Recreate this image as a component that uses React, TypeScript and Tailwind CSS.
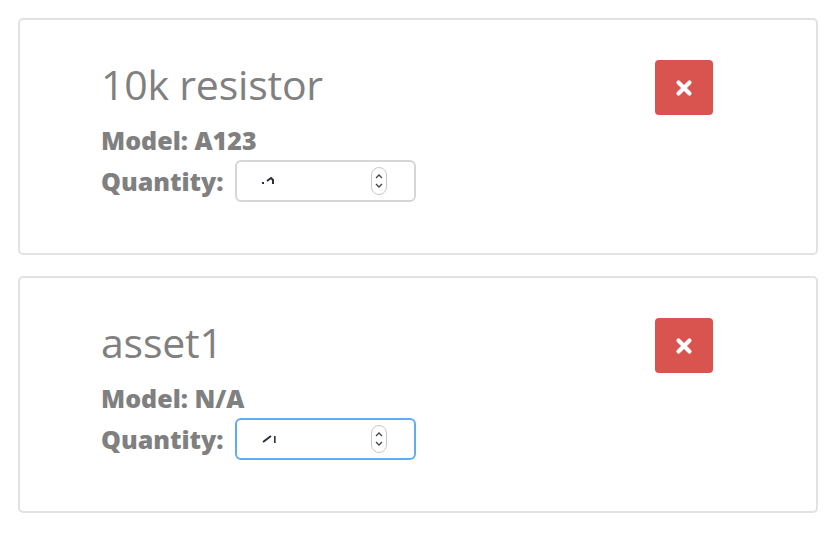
import React from "react";

interface PartItem {
  name: string;
  model: string;
  focused: boolean;
  glyph: "a" | "b";
}

const parts: PartItem[] = [
  { name: "10k resistor", model: "A123", focused: false, glyph: "a" },
  { name: "asset1", model: "N/A", focused: true, glyph: "b" },
];

const Spinner = () => (
  <svg width="16" height="28" viewBox="0 0 16 28" className="shrink-0">
    <rect x="0.5" y="0.5" width="15" height="27" rx="7.5" fill="#fff" stroke="#c8c8c8" />
    <path d="M5 11 L8 8 L11 11" fill="none" stroke="#444" strokeWidth="1.3" />
    <path d="M5 17 L8 20 L11 17" fill="none" stroke="#444" strokeWidth="1.3" />
  </svg>
);

// the value in the reference is a half-drawn glyph, so it's sketched here
const ValueMark = ({ kind }: { kind: "a" | "b" }) =>
  kind === "a" ? (
    <svg width="14" height="10" viewBox="0 0 14 10">
      <rect x="0" y="6" width="2" height="2" fill="#2a2f3a" />
      <path d="M5 5 L9 2 L11 4 L11 8" fill="none" stroke="#2a2f3a" strokeWidth="2" />
    </svg>
  ) : (
    <svg width="16" height="10" viewBox="0 0 16 10">
      <path d="M1 8 L9 2" stroke="#2a2f3a" strokeWidth="2" />
      <rect x="12" y="2" width="1.6" height="7" fill="#2a2f3a" />
    </svg>
  );

const PartCard: React.FC<{ part: PartItem }> = ({ part }) => {
  return (
    <div className="flex justify-between rounded-[5px] border-2 border-[#e2e2e2] bg-white w-[800px] h-[237px]">
      <div className="pl-[81px] pt-[42px]">
        <h3 className="text-[41px] leading-[44px] text-[#808080] font-normal tracking-[-0.2px]">{part.name}</h3>
        <p className="mt-[21px] text-[25px] leading-[26px] font-extrabold text-[#808080]">
          Model: {part.model}
        </p>
        <div className="mt-[7px] flex items-center gap-[11px]">
          <span className="text-[25px] leading-[26px] font-extrabold text-[#808080]">Quantity:</span>
          <div
            className={
              part.focused
                ? "flex items-center w-[181px] h-[42px] rounded-[6px] border-2 border-[#62adf2] pl-[25px] pr-[27px] justify-between"
                : "flex items-center w-[181px] h-[42px] rounded-[6px] border-2 border-[#d6d6d6] pl-[25px] pr-[27px] justify-between"
            }
          >
            <ValueMark kind={part.glyph} />
            <Spinner />
          </div>
        </div>
      </div>
      <button className="mt-[40px] mr-[103px] w-[58px] h-[55px] rounded-[4px] bg-[#d9534f] flex items-center justify-center cursor-pointer">
        <svg width="18" height="18" viewBox="0 0 18 18">
          <path d="M3.5 3.5 L14.5 14.5 M14.5 3.5 L3.5 14.5" stroke="#fff" strokeWidth="4.2" strokeLinecap="round" />
        </svg>
      </button>
    </div>
  );
};

const App: React.FC = () => {
  return (
    <div
      className="bg-white w-[834px] h-[536px] pl-[18px] pt-[18px] flex flex-col gap-[21px]"
      style={{ fontFamily: '"Open Sans", "Liberation Sans", sans-serif' }}
    >
      {parts.map((p) => (
        <PartCard key={p.name} part={p} />
      ))}
    </div>
  );
};

export default App;
